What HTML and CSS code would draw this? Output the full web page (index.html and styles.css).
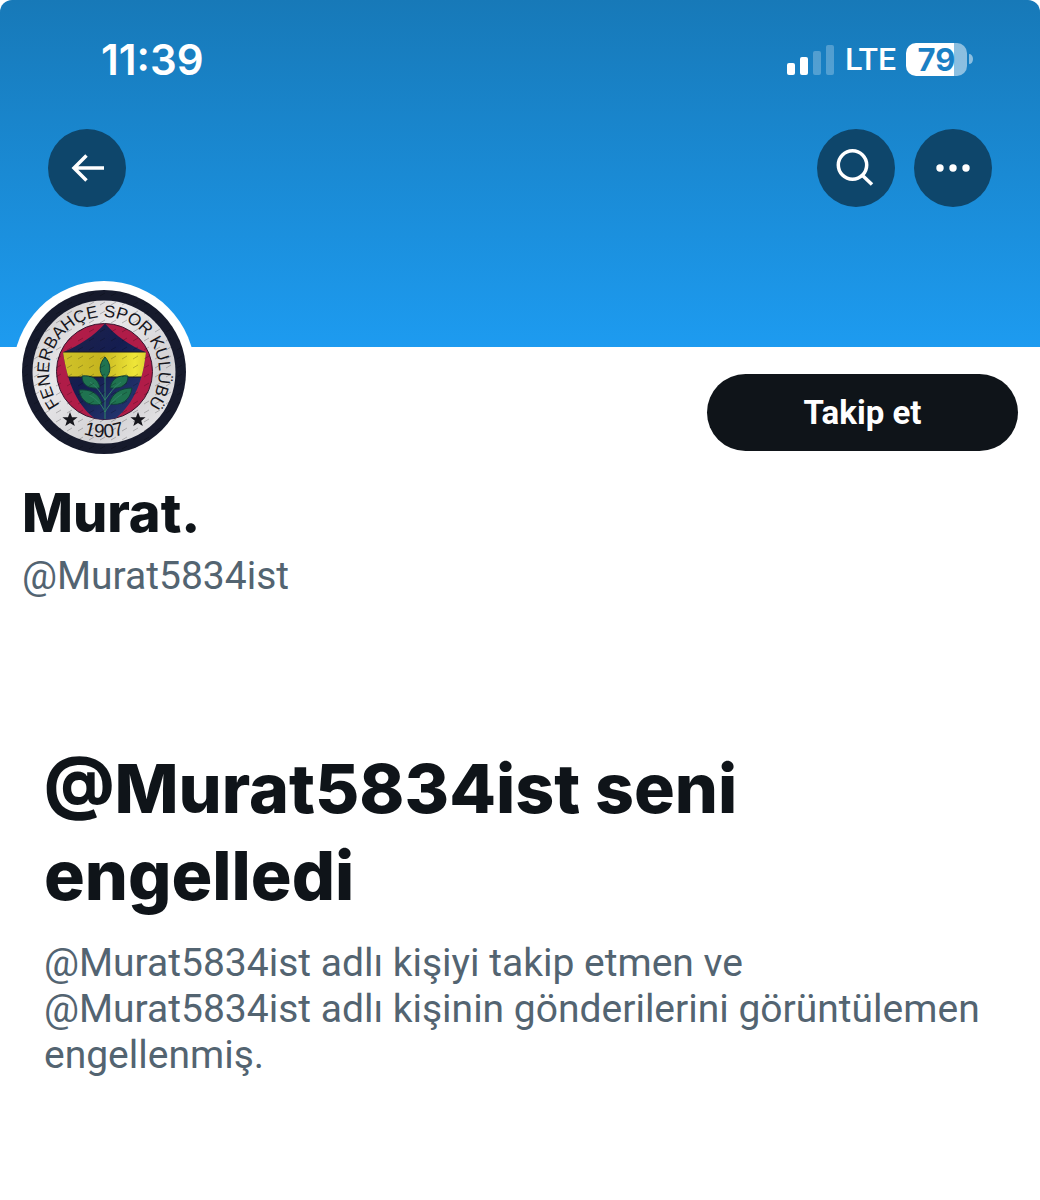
FILE: index.html
```html
<!DOCTYPE html>
<html lang="tr">
<head>
    <meta charset="UTF-8">
    <meta name="viewport" content="width=device-width, initial-scale=1.0">
    <title>Murat. (@Murat5834ist)</title>
    <link rel="stylesheet" href="styles.css">
</head>
<body>
    <header class="banner">
        <div class="status-bar">
            <span class="time">11:39</span>
            <div class="status-icons">
                <svg class="signal" viewBox="0 0 48 32" aria-hidden="true">
                    <rect x="0" y="20" width="8" height="12" rx="2"/>
                    <rect x="13" y="14" width="8" height="18" rx="2"/>
                    <rect class="dim" x="26" y="8" width="8" height="24" rx="2"/>
                    <rect class="dim" x="39" y="2" width="8" height="30" rx="2"/>
                </svg>
                <span class="network">LTE</span>
                <div class="battery">
                    <span class="battery-level">79</span>
                    <svg class="battery-tip" viewBox="0 0 4 12" aria-hidden="true"><path d="M0 1c2.4 0 4 2 4 5s-1.600 5-4 5z"/></svg>
                </div>
            </div>
        </div>
        <nav class="nav-bar">
            <button class="round-btn" type="button" aria-label="Geri">
                <svg viewBox="0 0 78 78"><path d="M56 39H26M38.500 26.500L26 39 38.500 51.500"/></svg>
            </button>
            <div class="nav-actions">
                <button class="round-btn" type="button" aria-label="Ara">
                    <svg viewBox="0 0 78 78"><circle cx="35.500" cy="36" r="14.200"/><path d="M45.500 46.500l9.500 9"/></svg>
                </button>
                <button class="round-btn" type="button" aria-label="Diğer">
                    <svg class="dots" viewBox="0 0 78 78"><circle cx="26" cy="39" r="3.700"/><circle cx="39" cy="39" r="3.700"/><circle cx="52" cy="39" r="3.700"/></svg>
                </button>
            </div>
        </nav>
    </header>

    <main>
        <section class="profile">
            <div class="profile-top">
                <div class="avatar">
                    <svg viewBox="0 0 164 164" role="img" aria-label="Fenerbahçe Spor Kulübü">
                        <defs>
                            <path id="arcCrest" d="M43.100 120.900A55 55 0 1 1 120.900 120.900"/>
                            <path id="arcBottom" d="M20 102A65 65 0 0 0 144 102"/>
                            <clipPath id="shieldClip">
                                <path d="M83 33.500C94 46 107 55 124 62.300C121 89 113 113 94 128Q83 131 72 128C53 113 45 89 41 62.300C58 55 72 46 83 33.500z"/>
                            </clipPath>
                            <linearGradient id="shine" x1="0" y1="0" x2="1" y2="1">
                                <stop offset="0" stop-color="#c9c7c9"/>
                                <stop offset=".35" stop-color="#e9e8ea"/>
                                <stop offset=".7" stop-color="#d3d2d5"/>
                                <stop offset="1" stop-color="#efeff1"/>
                            </linearGradient>
                            <linearGradient id="gold" x1="0" y1="0" x2="1" y2="0">
                                <stop offset="0" stop-color="#d2c52c"/>
                                <stop offset=".45" stop-color="#c6b51f"/>
                                <stop offset=".82" stop-color="#efe638"/>
                                <stop offset="1" stop-color="#d3c72c"/>
                            </linearGradient>
                            <linearGradient id="navy" x1="0" y1="0" x2="1" y2="1">
                                <stop offset="0" stop-color="#20244a"/>
                                <stop offset=".45" stop-color="#141d50"/>
                                <stop offset="1" stop-color="#2c4180"/>
                            </linearGradient>
                            <pattern id="stitch" width="11" height="9" patternUnits="userSpaceOnUse">
                                <path d="M1 6l5-3" fill="none" stroke="#000" stroke-opacity=".22" stroke-width="1"/>
                            </pattern>
                        </defs>
                        <circle cx="82" cy="82" r="82" fill="#161a2c"/>
                        <circle cx="82" cy="82" r="71.500" fill="url(#shine)"/>
                        <circle cx="82.500" cy="81.500" r="48" fill="#b01c48" stroke="#3a1630" stroke-width="1"/>
                        <g clip-path="url(#shieldClip)">
                            <rect x="35" y="30" width="95" height="105" fill="url(#navy)"/>
                            <rect x="35" y="62" width="95" height="25" fill="url(#gold)" stroke="#1a1a20" stroke-width="1"/>
                        </g>
                        <g fill="#1f7350" stroke="#103f3a" stroke-width="1">
                            <path d="M83 67C77 74 76 82 83 89C90 82 89 74 83 67z"/>
                            <path d="M60 86C60 95 66 99 78 98C76 88 69 85 60 86z"/>
                            <path d="M106 86C106 95 100 99 88 98C90 88 97 85 106 86z"/>
                            <path d="M57 100C59 112 68 117 80 114C77 103 68 99 57 100z"/>
                            <path d="M110 98C108 111 99 116 87 114C90 103 99 98 110 98z"/>
                        </g>
                        <path d="M83 86V129M83 110C79 103 75 97 68 92M83 110C88 103 92 97 99 92M83 122C80 115 75 109 67 105M83 122C87 115 92 109 100 104" fill="none" stroke="#308467" stroke-width="1"/>
                        <circle cx="82" cy="82" r="82" fill="url(#stitch)"/>
                        <g class="crest-text">
                            <text><textPath href="#arcCrest" startOffset="50%">FENERBAHÇE SPOR KULÜBÜ</textPath></text>
                            <text class="crest-year"><textPath href="#arcBottom" startOffset="50%">1907</textPath></text>
                            <path id="star" d="M48 122l2 5.200 5.600.1-4.400 3.400 1.600 5.400-4.800-3.100-4.700 3.100 1.600-5.400-4.500-3.400 5.600-.1z"/>
                            <use href="#star" x="68"/>
                        </g>
                    </svg>
                </div>
                <button class="follow-btn" type="button">Takip et</button>
            </div>
            <h1 class="name">Murat.</h1>
            <p class="handle">@Murat5834ist</p>
        </section>

        <section class="blocked">
            <h2>@Murat5834ist seni engelledi</h2>
            <p>@Murat5834ist adlı kişiyi takip etmen ve @Murat5834ist adlı kişinin gönderilerini görüntülemen engellenmiş.</p>
        </section>
    </main>
</body>
</html>
```
FILE: styles.css
```css
* {
    box-sizing: border-box;
}
body {
    margin: 0;
    background: #fff;
    color: #0f1419;
    font-family: Roboto, "Liberation Sans", sans-serif;
}
h1, h2, p {
    margin: 0;
}
h1, h2 {
    font-family: Inter, Roboto, sans-serif;
    font-weight: 800;
}
.banner {
    border-radius: 12px 12px 0 0;
    padding-bottom: 140px;
    background: linear-gradient(#1779b8, #1d9bf0);
    color: #fff;
}
.status-bar {
    display: flex;
    justify-content: space-between;
    align-items: center;
    height: 129px;
    padding: 0 67px 11px 101px;
    font-family: Inter, sans-serif;
}
.time {
    font-size: 42px;
    font-weight: 600;
}
.status-icons {
    display: flex;
    align-items: center;
    gap: 10px;
}
.signal {
    width: 48px;
    height: 32px;
    fill: #fff;
}
.signal .dim {
    opacity: 0.25;
}
.network {
    font-family: Roboto, sans-serif;
    font-size: 32px;
    font-weight: 500;
    line-height: 32px;
}
.battery {
    display: flex;
    align-items: center;
    gap: 2px;
}
.battery-level {
    width: 61px;
    height: 33px;
    border-radius: 10px;
    background: linear-gradient(90deg, #fff 48px, rgba(255, 255, 255, 0.5) 48px);
    color: #1a80c4;
    font-size: 31px;
    font-weight: 700;
    line-height: 33px;
    text-align: center;
}
.battery-tip {
    width: 4px;
    height: 12px;
    fill: rgba(255, 255, 255, 0.5);
}
.nav-bar {
    display: flex;
    justify-content: space-between;
    padding: 0 48px;
}
.nav-actions {
    display: flex;
    gap: 19px;
}
.round-btn {
    width: 78px;
    height: 78px;
    padding: 0;
    border: none;
    border-radius: 50%;
    background: #0e466b;
    cursor: pointer;
}
.round-btn svg {
    display: block;
    fill: none;
    stroke: #fff;
    stroke-width: 3.5;
}
.round-btn .dots {
    fill: #fff;
    stroke: none;
}
.profile {
    padding: 0 22px;
}
.profile-top {
    display: flex;
    justify-content: space-between;
    align-items: flex-start;
}
.avatar {
    width: 182px;
    height: 182px;
    margin: -66px 0 0 -9px;
    padding: 9px;
    border-radius: 50%;
    background: #fff;
}
.avatar svg {
    display: block;
}
.crest-text {
    fill: #16161c;
    font-family: "Liberation Sans", Arial, sans-serif;
    font-size: 17px;
    text-anchor: middle;
}
.crest-year {
    font-size: 19px;
}
.follow-btn {
    width: 311px;
    height: 77px;
    margin-top: 27px;
    border: none;
    border-radius: 39px;
    background: #0f1419;
    color: #fff;
    font-family: inherit;
    font-size: 33px;
    font-weight: 700;
    cursor: pointer;
}
.name {
    margin-top: 14px;
    font-size: 54px;
    line-height: 72px;
}
.handle {
    color: #536471;
    font-size: 39px;
    line-height: 54px;
}
.blocked {
    padding: 142px 44px 120px;
}
.blocked h2 {
    font-size: 68px;
    line-height: 87px;
}
.blocked p {
    margin-top: 21px;
    color: #536471;
    font-size: 39px;
    line-height: 46px;
}
```
